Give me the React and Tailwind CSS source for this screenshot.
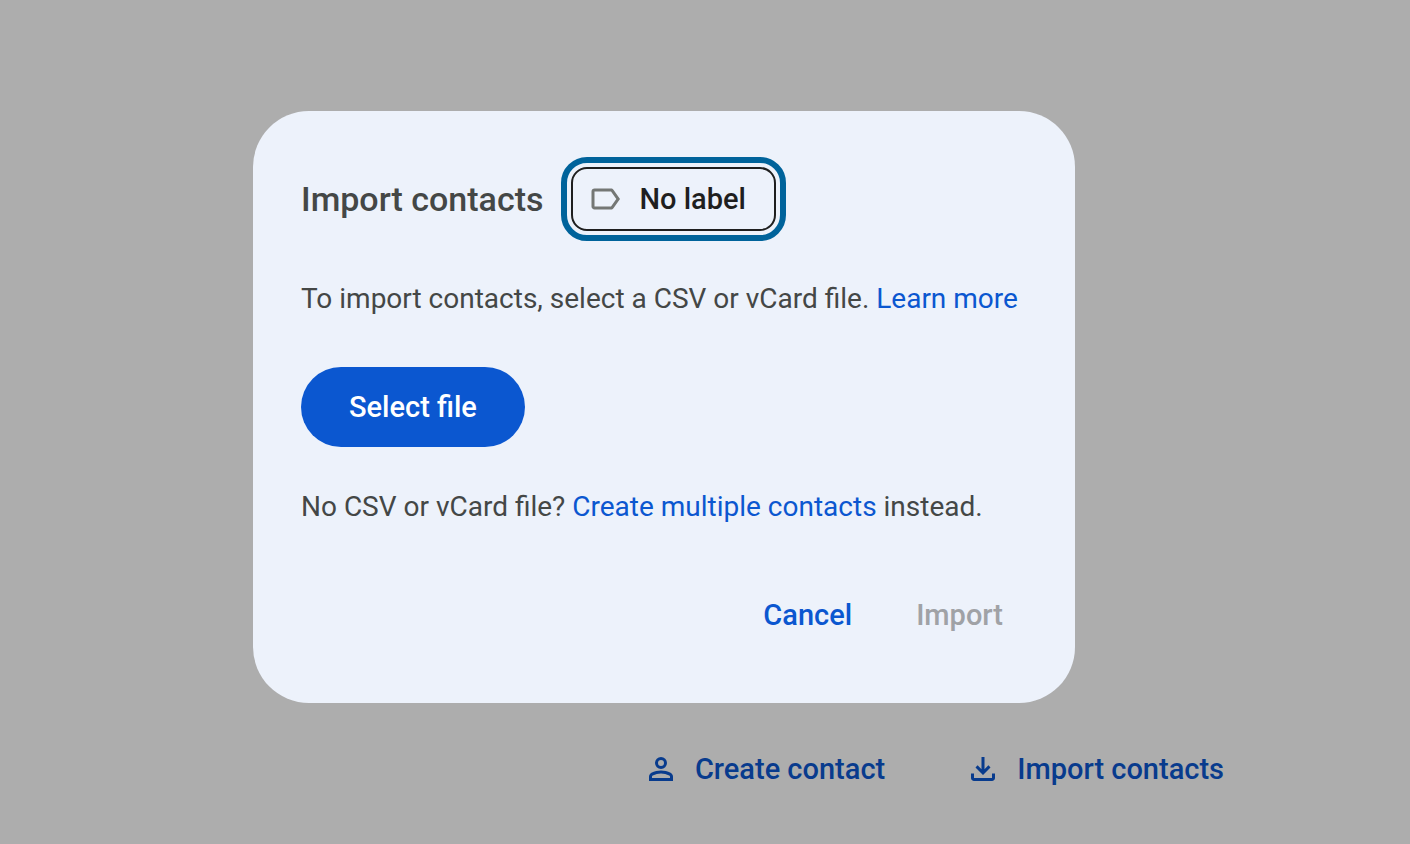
import React from "react";

const LabelIcon = () => (
  <svg viewBox="0 0 24 24" className="size-9 shrink-0" fill="currentColor" aria-hidden="true">
    <path d="M17.63 5.84C17.27 5.33 16.67 5 16 5L5 5.01C3.9 5.01 3 5.9 3 7v10c0 1.1.9 1.99 2 1.99L16 19c.67 0 1.27-.33 1.63-.84L22 12l-4.37-6.16zM16 17H5V7h11l3.55 5L16 17z" />
  </svg>
);

const PersonIcon = () => (
  <svg viewBox="0 0 24 24" className="size-9 shrink-0" fill="currentColor" aria-hidden="true">
    <path
      fillRule="evenodd"
      d="M12 4a4 4 0 1 0 0 8a4 4 0 0 0 0-8zm0 2a2 2 0 1 1 0 4a2 2 0 0 1 0-4zM4 20v-2.8q0-.85.438-1.562T5.6 14.55q1.55-.775 3.15-1.162T12 13t3.25.388t3.15 1.162q.725.375 1.163 1.088T20 17.2V20zm2-2h12v-.8q0-.275-.137-.5t-.363-.35q-1.35-.675-2.725-1.012T12 15t-2.775.338T6.5 16.35q-.225.125-.363.35T6 17.2z"
    />
  </svg>
);

const DownloadIcon = () => (
  <svg viewBox="0 0 24 24" className="size-9 shrink-0" fill="currentColor" aria-hidden="true">
    <path d="m12 16l-5-5l1.4-1.45l2.6 2.6V4h2v8.15l2.6-2.6L17 11zm-6 4q-.825 0-1.412-.587T4 18v-3h2v3h12v-3h2v3q0 .825-.587 1.413T18 20z" />
  </svg>
);

const App = () => {
  return (
    <div className="min-h-screen bg-[#adadad] font-['Roboto',sans-serif] text-[28px] leading-10">
      <div className="flex justify-center pt-[111px] pl-4 pr-[98px]">
        <div
          role="dialog"
          aria-labelledby="import-title"
          className="w-full max-w-[822px] rounded-[56px] bg-[#edf2fb] px-12 pt-14 pb-17 text-[#444746]"
        >
          {/* Title and label picker */}
          <div className="flex items-center gap-7">
            <h2 id="import-title" className="whitespace-nowrap text-[34px] font-medium">
              Import contacts
            </h2>
            <button
              type="button"
              className="flex h-16 items-center gap-4 rounded-2xl border-2 border-[#1f1f1f] pl-[14px] pr-7 text-[29px] font-medium whitespace-nowrap text-[#1f1f1f] outline-6 outline-offset-4 outline-[#00639b]"
            >
              <span className="text-[#747775]">
                <LabelIcon />
              </span>
              No label
            </button>
          </div>

          <p className="mt-12 whitespace-nowrap">
            To import contacts, select a CSV or vCard file.{" "}
            <a href="#learn" className="text-[#0b57d0]">
              Learn more
            </a>
          </p>

          <button
            type="button"
            className="mt-12 h-20 rounded-full bg-[#0b57d0] px-12 text-[29px] font-medium text-white"
          >
            Select file
          </button>

          <p className="mt-10 whitespace-nowrap">
            No CSV or vCard file?{" "}
            <a href="#create-multiple" className="text-[#0b57d0]">
              Create multiple contacts
            </a>{" "}
            instead.
          </p>

          {/* Actions */}
          <div className="mt-17 flex justify-end gap-16 pr-6 text-[29px] font-medium">
            <button type="button" className="text-[#0b57d0]">
              Cancel
            </button>
            <button type="button" disabled className="text-[#a0a2a6]">
              Import
            </button>
          </div>
        </div>
      </div>

      {/* Page actions behind the dialog */}
      <div className="mt-[46px] flex justify-end gap-20 pr-[186px] text-[29px] font-medium text-[#083b8d]">
        <button type="button" className="flex items-center gap-4">
          <PersonIcon />
          Create contact
        </button>
        <button type="button" className="flex items-center gap-4">
          <DownloadIcon />
          Import contacts
        </button>
      </div>
    </div>
  );
};

export default App;
